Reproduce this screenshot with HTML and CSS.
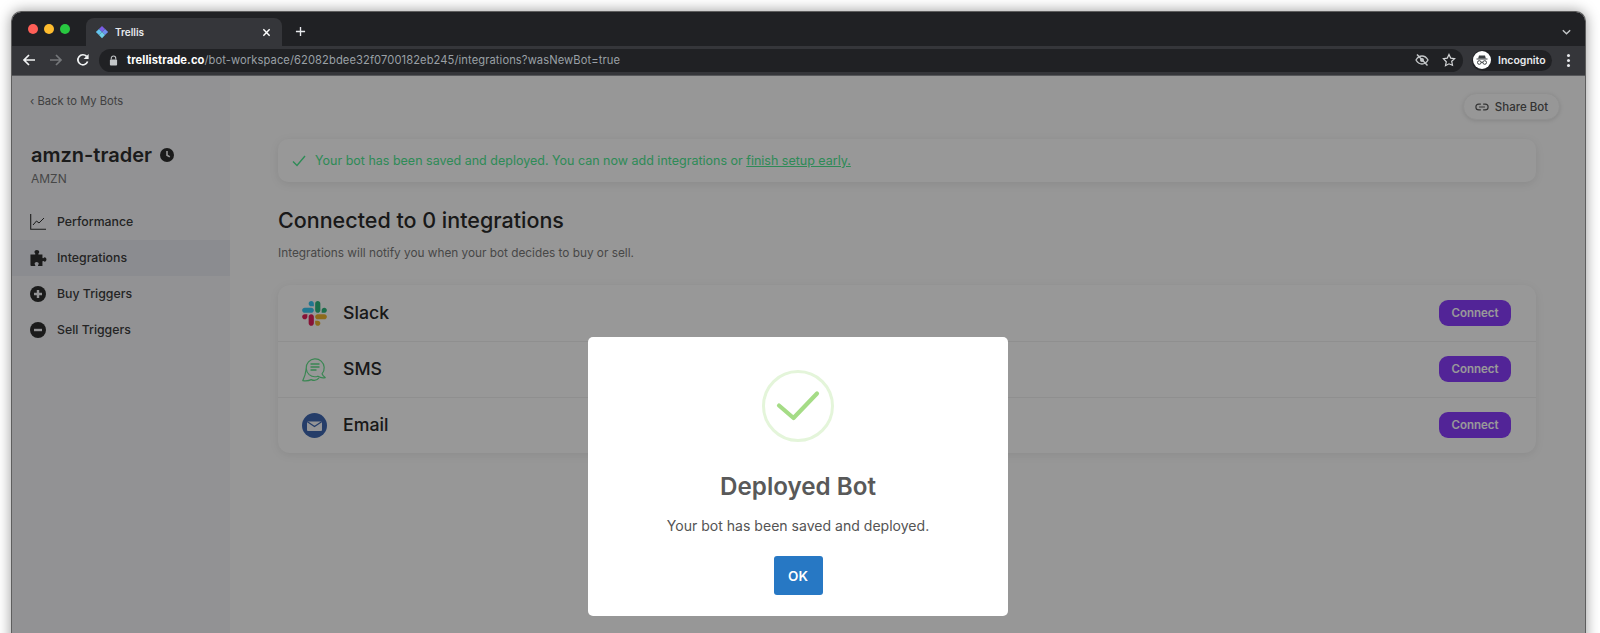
FILE: index.html
```html
<!DOCTYPE html>
<html lang="en">
<head>
<meta charset="utf-8">
<title>Trellis</title>
<link rel="stylesheet" href="styles.css">
</head>
<body>
<div class="window">
  <div class="titlebar">
    <div class="lights"><span class="light red"></span><span class="light yellow"></span><span class="light green"></span></div>
    <div class="tab">
      <svg class="favicon" viewBox="0 0 16 16"><path d="M8 1l3.500 3.500L8 8 4.500 4.500z" fill="#7a5ce6"/><path d="M11.500 4.500L15 8l-3.500 3.500L8 8z" fill="#6f8fef"/><path d="M4.500 4.500L8 8l-3.500 3.500L1 8z" fill="#63c3ee"/><path d="M8 8l3.500 3.500L8 15l-3.500-3.500z" fill="#6fd0e8"/></svg>
      <span class="tab-title">Trellis</span>
      <svg class="tab-close" viewBox="0 0 10 10"><path d="M1.500 1.500l7 7M8.500 1.500l-7 7" stroke="#fff" stroke-width="1.600" fill="none"/></svg>
    </div>
    <svg class="new-tab" viewBox="0 0 12 12"><path d="M6 1v10M1 6h10" stroke="#e8eaed" stroke-width="1.500" fill="none"/></svg>
    <svg class="tab-menu" viewBox="0 0 12 8"><path d="M2 2l4 4 4-4" stroke="#c4c7c9" stroke-width="1.500" fill="none"/></svg>
  </div>
  <div class="toolbar">
    <span class="nav-btn"><svg viewBox="0 0 14 14"><path d="M13 7H2M7 2L2 7l5 5" stroke="#f1f3f4" stroke-width="1.700" fill="none"/></svg></span>
    <span class="nav-btn"><svg viewBox="0 0 14 14"><path d="M1 7h11M7 2l5 5-5 5" stroke="#75777a" stroke-width="1.700" fill="none"/></svg></span>
    <span class="nav-btn"><svg viewBox="0 0 14 14"><path d="M11.600 8.500A5 5 0 1 1 10.600 3.400" stroke="#f1f3f4" stroke-width="1.700" fill="none"/><path d="M12.600 1v5h-5z" fill="#f1f3f4"/></svg></span>
    <div class="omnibox">
      <svg class="lock" viewBox="0 0 10 12"><path d="M2.500 5V3.500a2.500 2.500 0 0 1 5 0V5" stroke="#c4c7c9" stroke-width="1.200" fill="none"/><rect x="1" y="5" width="8" height="6.500" rx="1" fill="#c4c7c9"/></svg>
      <span class="url"><b>trellistrade.co</b>/bot-workspace/62082bdee32f0700182eb245/integrations?wasNewBot=true</span>
      <svg class="omni-icon" viewBox="0 0 14 14"><path d="M1 7c1.500-2.600 3.500-4 6-4s4.500 1.400 6 4c-1.500 2.600-3.500 4-6 4s-4.500-1.400-6-4z" stroke="#c4c7c9" stroke-width="1.300" fill="none"/><circle cx="7" cy="7" r="2" fill="#c4c7c9"/><path d="M2 1.500l10.500 11" stroke="#c4c7c9" stroke-width="1.500"/></svg>
      <svg class="omni-icon star" viewBox="0 0 14 14"><path d="M7 1.500l1.700 3.600 3.900.5-2.900 2.700.8 3.900L7 10.800l-3.500 1.900.8-3.900L1.400 5.600l3.900-.5z" stroke="#d4d6d8" stroke-width="1.200" fill="none"/></svg>
    </div>
    <div class="profile">
      <svg class="avatar" viewBox="0 0 18 18"><circle cx="9" cy="9" r="9" fill="#fff"/><path d="M6 4.500h6l.8 2.800H5.200zM3.500 7.500h11v1h-11z" fill="#3c4043"/><circle cx="6.300" cy="11.500" r="1.800" fill="none" stroke="#3c4043"/><circle cx="11.700" cy="11.500" r="1.800" fill="none" stroke="#3c4043"/><path d="M8 11.300h2" stroke="#3c4043"/></svg>
      <span class="profile-name">Incognito</span>
    </div>
    <span class="kebab"><i></i><i></i><i></i></span>
  </div>
  <div class="content">
    <aside class="sidebar">
      <a class="back">‹ Back to My Bots</a>
      <h1 class="bot-name">amzn-trader
        <svg class="clock" viewBox="0 0 14 14"><circle cx="7" cy="7" r="7" fill="#2d2d2d"/><path d="M7 3v4.200l2.800 1.700" stroke="#fcfcfc" stroke-width="1.600" fill="none"/></svg>
      </h1>
      <div class="ticker">AMZN</div>
      <nav class="nav">
        <div class="nav-row">
          <svg class="nav-icon" viewBox="0 0 16 16"><path d="M.7 0v15.300H16" stroke="#2d2d2d" stroke-width="1.100" fill="none"/><path d="M3 11l3.500-4 2.500 2 5-5" stroke="#2d2d2d" stroke-width="1" fill="none"/></svg>
          <span>Performance</span>
        </div>
        <div class="nav-row active">
          <svg class="nav-icon" viewBox="0 0 18 18"><path d="M.5 5H5.200C6 5 6.300 4.400 5.800 3.800 5.300 3.200 5 2.700 5 2.200 5 1 6.200 0 7.700 0s2.700 1 2.700 2.200c0 .5-.3 1-.8 1.600-.5.600-.2 1.200.6 1.200h3.800v3.300c0 .8.600 1.100 1.200.6.500-.4 1-.7 1.400-.7 1 0 1.900 1.100 1.900 2.500s-.9 2.500-1.900 2.500c-.4 0-.9-.3-1.400-.7-.6-.5-1.200-.2-1.200.6V18H9.800c-.8 0-1.100-.6-.6-1.200.4-.5.600-.9.600-1.300 0-1.100-1-2-2.300-2s-2.300.9-2.300 2c0 .4.200.8.600 1.300.5.600.2 1.200-.6 1.200H1.500c-.6 0-1-.4-1-1z" fill="#2d2d2d"/></svg>
          <span>Integrations</span>
        </div>
        <div class="nav-row">
          <svg class="nav-icon" viewBox="0 0 16 16"><circle cx="8" cy="8" r="8" fill="#2d2d2d"/><path d="M8 4v8M4 8h8" stroke="#f3f4f7" stroke-width="2.400"/></svg>
          <span>Buy Triggers</span>
        </div>
        <div class="nav-row">
          <svg class="nav-icon" viewBox="0 0 16 16"><circle cx="8" cy="8" r="8" fill="#2d2d2d"/><path d="M4 8h8" stroke="#f3f4f7" stroke-width="2.400"/></svg>
          <span>Sell Triggers</span>
        </div>
      </nav>
    </aside>
    <main class="main">
      <div class="share-row">
        <button class="share">
          <svg class="link-icon" viewBox="0 0 24 12"><path d="M10 1H6.500a5 5 0 0 0 0 10H10M14 1h3.500a5 5 0 0 1 0 10H14M7 6h10" stroke="#555" stroke-width="2" fill="none"/></svg>
          Share Bot
        </button>
      </div>
      <div class="banner">
        <svg class="banner-check" viewBox="0 0 14 12"><path d="M1 6.500l4 4L13 1" stroke="#4de891" stroke-width="1.400" fill="none"/></svg>
        <span>Your bot has been saved and deployed. You can now add integrations or <u>finish setup early.</u></span>
      </div>
      <h2 class="heading">Connected to 0 integrations</h2>
      <p class="sub">Integrations will notify you when your bot decides to buy or sell.</p>
      <div class="card">
        <div class="row">
          <svg class="row-icon" viewBox="0 0 127 127"><path d="M27.200 80c0 7.300-5.900 13.200-13.200 13.200C6.700 93.200.8 87.300.8 80c0-7.300 5.900-13.200 13.200-13.200h13.200V80zm6.600 0c0-7.300 5.900-13.200 13.200-13.200 7.300 0 13.200 5.900 13.200 13.200v33c0 7.300-5.900 13.200-13.200 13.200-7.300 0-13.200-5.900-13.200-13.200V80z" fill="#E01E5A"/><path d="M47 27c-7.300 0-13.200-5.900-13.200-13.200C33.800 6.500 39.700.6 47 .6c7.300 0 13.200 5.900 13.200 13.200V27H47zm0 6.700c7.300 0 13.200 5.900 13.200 13.200 0 7.300-5.900 13.200-13.200 13.200H13.900C6.600 60.100.7 54.200.7 46.900c0-7.300 5.900-13.200 13.200-13.200H47z" fill="#36C5F0"/><path d="M99.900 46.900c0-7.300 5.900-13.200 13.200-13.200 7.300 0 13.200 5.900 13.200 13.200 0 7.300-5.900 13.200-13.200 13.200H99.900V46.900zm-6.600 0c0 7.300-5.900 13.200-13.200 13.200-7.300 0-13.200-5.900-13.200-13.200V13.800C66.900 6.500 72.800.6 80.100.6c7.300 0 13.200 5.900 13.200 13.200v33.100z" fill="#2EB67D"/><path d="M80.100 99.800c7.300 0 13.200 5.900 13.200 13.200 0 7.300-5.900 13.200-13.200 13.200-7.300 0-13.200-5.900-13.200-13.200V99.800h13.200zm0-6.600c-7.300 0-13.200-5.900-13.200-13.200 0-7.300 5.900-13.200 13.200-13.200h33.100c7.300 0 13.200 5.900 13.200 13.200 0 7.300-5.900 13.200-13.200 13.200H80.100z" fill="#ECB22E"/></svg>
          <span class="row-name">Slack</span>
          <button class="connect">Connect</button>
        </div>
        <div class="row">
          <svg class="row-icon" viewBox="0 0 25 25"><path d="M7.200 17.600A9 9 0 1 1 20 16.800c.6 1.400 1.700 2.800 3.200 3.800-2.800.5-5.300 0-7.300-1.400a9 9 0 0 1-8.700-1.600z" stroke="#62e08a" stroke-width="1.200" fill="none" stroke-linejoin="round"/><path d="M4.300 11.500C3.800 15.500 2.700 20 .8 23.600c3 .4 6.200.2 8.400-1 2.500 1.200 5.800.7 7.800-1.800" stroke="#62e08a" stroke-width="1.200" fill="none" stroke-linejoin="round"/><path d="M8.500 7h9M8.500 10h9M8.500 13h6" stroke="#62e08a" stroke-width="1.300"/></svg>
          <span class="row-name">SMS</span>
          <button class="connect">Connect</button>
        </div>
        <div class="row">
          <svg class="row-icon" viewBox="0 0 25 25"><circle cx="12.500" cy="12.500" r="12.500" fill="#3e66b0"/><path d="M5 8.500h15V17a1 1 0 0 1-1 1H6a1 1 0 0 1-1-1z" fill="#f7f7fb"/><path d="M5 8.500l7.500 5 7.500-5" stroke="#3e66b0" stroke-width="1.300" fill="none"/></svg>
          <span class="row-name">Email</span>
          <button class="connect">Connect</button>
        </div>
      </div>
    </main>
    <div class="overlay">
      <div class="modal">
        <svg class="success" viewBox="0 0 72 72"><circle cx="36" cy="36" r="34.500" stroke="#e4f5da" stroke-width="3" fill="none"/><path d="M17 35.500l14.500 12.500L55 23.500" stroke="#a5dc86" stroke-width="4.200" stroke-linecap="round" stroke-linejoin="round" fill="none"/></svg>
        <h3 class="modal-title">Deployed Bot</h3>
        <p class="modal-text">Your bot has been saved and deployed.</p>
        <button class="ok">OK</button>
      </div>
    </div>
  </div>
</div>
</body>
</html>
```

FILE: styles.css
```css
* { box-sizing: border-box; }
html, body { margin: 0; height: 633px; overflow: hidden; background: #fff; }
body { font-family: "Inter", "Liberation Sans", sans-serif; padding: 11px 14px 0 11px; }

.window {
  height: 800px;
  display: flex;
  flex-direction: column;
  border: 1px solid #5e5e5e;
  border-bottom: 0;
  border-radius: 10px 10px 0 0;
  overflow: hidden;
  box-shadow: 0 0 14px rgba(0, 0, 0, .4);
}

.titlebar { height: 34px; background: #202124; display: flex; align-items: flex-end; flex: none; }
.lights { display: flex; gap: 6px; margin: 0 16px 12px 16px; }
.light { width: 10px; height: 10px; border-radius: 50%; }
.light.red { background: #ff5f57; }
.light.yellow { background: #febc2e; }
.light.green { background: #28c840; }
.tab {
  width: 196px; height: 28px; background: #35363a; border-radius: 8px 8px 0 0;
  display: flex; align-items: center; padding: 0 9px 0 9px; color: #e8eaed;
}
.favicon { width: 14px; height: 14px; flex: none; }
.tab-title { font-size: 10px; font-weight: 600; margin-left: 6px; flex: 1; }
.tab-close { width: 9px; height: 9px; margin-right: 2px; }
.new-tab { width: 11px; height: 11px; margin: 0 0 9px 13px; }
.tab-menu { width: 11px; height: 8px; margin: 0 13px 10px auto; }

.toolbar { height: 30px; flex: none; background: #35363a; border-bottom: 1px solid #56575a; display: flex; align-items: center; padding: 0 0 1px 3px; }
.nav-btn { width: 27px; display: flex; justify-content: center; }
.nav-btn svg { width: 14px; height: 14px; }
.omnibox { flex: 1; height: 23px; margin-left: 3px; background: #202124; border-radius: 12px; display: flex; align-items: center; padding: 0 36px 0 10px; }
.lock { width: 9px; height: 11px; flex: none; }
.url { margin-left: 9px; font-size: 11.150px; letter-spacing: .1px; color: #9aa0a6; flex: 1; white-space: nowrap; }
.url b { color: #fff; font-weight: 700; }
.omni-icon { width: 14px; height: 14px; margin-left: 13px; }
.omnibox .star { margin-right: -29px; }
.profile { width: 80px; height: 21px; margin-left: 9px; background: #202124; border-radius: 11px; display: flex; align-items: center; padding-left: 1px; }
.avatar { width: 18px; height: 18px; }
.profile-name { margin-left: 7px; font-size: 10.500px; font-weight: 600; color: #e8eaed; }
.kebab { width: 33px; display: flex; flex-direction: column; align-items: center; gap: 2px; }
.kebab i { width: 3px; height: 3px; border-radius: 50%; background: #e8eaed; }

.content { flex: 1; display: flex; position: relative; background: #fcfcfc; }

.sidebar { width: 218px; flex: none; background: #f3f4f7; padding-top: 17px; color: #444; }
.back { display: block; margin-left: 18px; font-size: 11.200px; line-height: 16px; color: #6b6b6b; }
.bot-name { margin: 32px 0 0 19px; font-size: 20px; line-height: 28px; font-weight: 600; color: #2d2d2d; display: flex; align-items: center; gap: 8px; }
.clock { width: 14px; height: 14px; }
.ticker { margin: 2px 0 0 19px; font-size: 12px; line-height: 16px; color: #777; }
.nav { margin-top: 17px; }
.nav-row { height: 36px; display: flex; align-items: center; padding-left: 18px; gap: 10px; font-size: 12.300px; font-weight: 500; color: #3c3c3c; }
.nav-row span { padding-bottom: 1px; }
.nav-row.active { background: #e8eaf0; }
.nav-icon { width: 18px; height: 16px; flex: none; margin-left: -1px; }

.main { flex: 1; padding: 17px 25px 0 48px; }
.share-row { display: flex; justify-content: flex-end; }
.share {
  width: 97px; height: 27px; padding: 0; display: flex; align-items: center; justify-content: center; gap: 6px;
  border: 1px solid #f0f0f0; border-radius: 14px; background: #fcfcfc; box-shadow: 0 1px 4px rgba(0, 0, 0, .12);
  font: 500 11.500px "Inter", "Liberation Sans", sans-serif; color: #555;
}
.link-icon { width: 14px; height: 8px; }
.banner {
  height: 43px; margin: 19px 24px 0 0; padding-left: 14px; display: flex; align-items: center; gap: 9px;
  background: #fdfdfd; border-radius: 10px; box-shadow: 0 2px 10px rgba(0, 0, 0, .09);
  font-size: 12.500px; color: #4de891; white-space: nowrap;
}
.banner-check { width: 14px; height: 12px; flex: none; }
.heading { margin: 23px 0 0; font-size: 21.500px; line-height: 30px; font-weight: 500; color: #2a2a2a; }
.sub { margin: 9px 0 0; font-size: 11.800px; line-height: 18px; color: #777; }
.card { margin: 23px 24px 0 0; background: #fdfdfd; border-radius: 12px; box-shadow: 0 2px 10px rgba(0, 0, 0, .08); }
.row { height: 56px; display: flex; align-items: center; padding: 0 25px 0 24px; }
.row + .row { border-top: 1px solid #efefef; padding-bottom: 1px; }
.row-icon { width: 25px; height: 25px; flex: none; }
.row-name { margin-left: 16px; padding-bottom: 2px; flex: 1; font-size: 17.700px; font-weight: 500; color: #2a2a2a; }
.connect {
  width: 72px; height: 26px; padding: 0; border: 0; border-radius: 9px; background: #893cfc; color: #fff;
  font: 600 11.500px "Inter", "Liberation Sans", sans-serif;
}

.overlay { position: absolute; inset: 0; background: rgba(0, 0, 0, .4); display: flex; justify-content: center; align-items: flex-start; padding: 261px 1px 0 0; }
.modal { width: 420px; height: 279px; padding-top: 33px; background: #fff; border-radius: 5px; display: flex; flex-direction: column; align-items: center; }
.success { width: 72px; height: 72px; flex: none; }
.modal-title { margin: 29px 0 0; font-size: 24.200px; line-height: 32px; font-weight: 600; color: #595959; }
.modal-text { margin: 13px 0 0; font-size: 14.060px; line-height: 20px; color: #545454; }
.ok { width: 49px; height: 39px; margin-top: 20px; padding: 0; border: 0; border-radius: 3px; background: #2778c4; color: #fff; font: 600 13.500px "Inter", "Liberation Sans", sans-serif; }
```
